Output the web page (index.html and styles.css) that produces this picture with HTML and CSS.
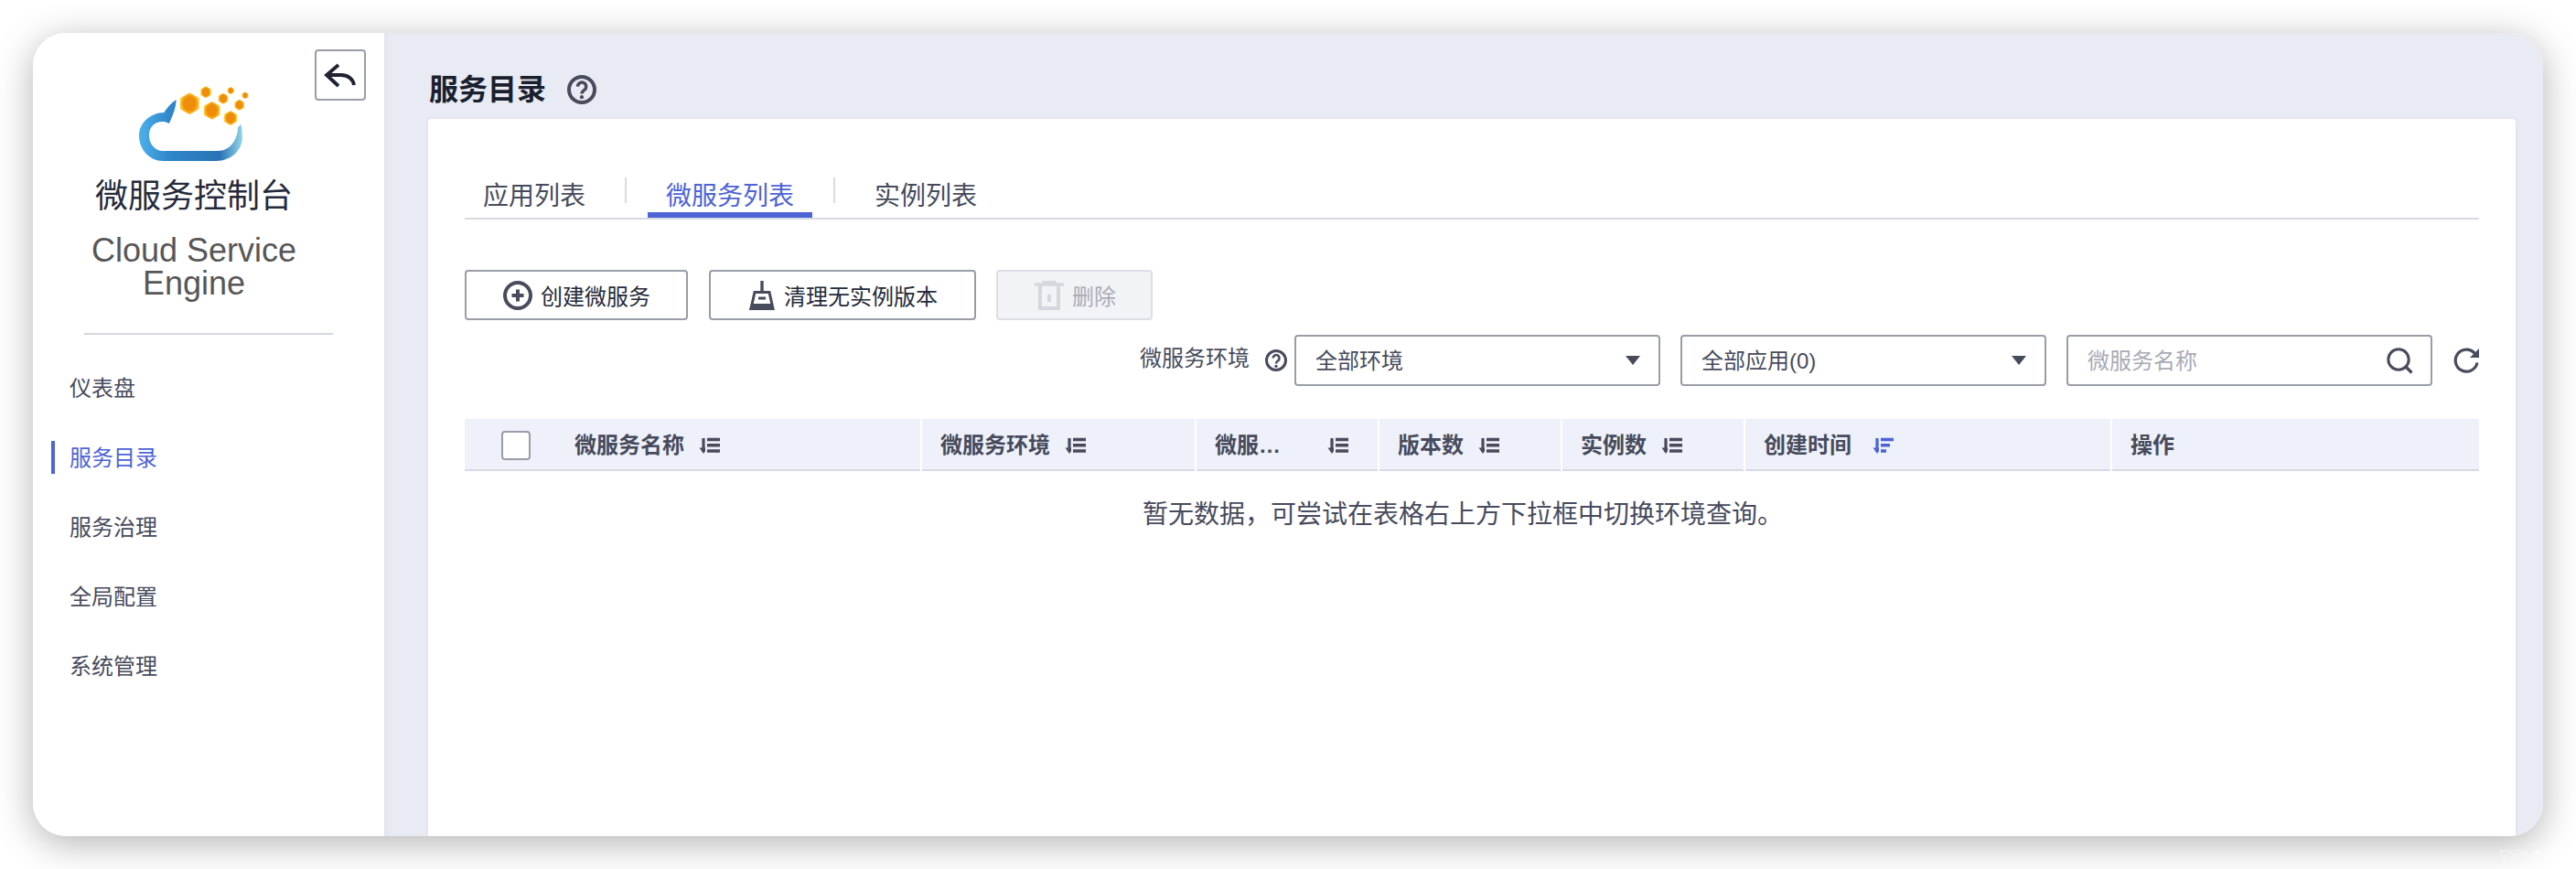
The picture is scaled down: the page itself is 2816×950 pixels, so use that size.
FILE: index.html
```html
<!DOCTYPE html>
<html lang="zh-CN">
<head>
<meta charset="utf-8">
<title>微服务控制台</title>
<link rel="stylesheet" href="styles.css">
</head>
<body>
<svg class="defs" width="0" height="0" aria-hidden="true">
  <defs>
    <radialGradient id="hexfill">
      <stop offset="0.62" stop-color="#ef8d08"/>
      <stop offset="1" stop-color="#ffcd2e"/>
    </radialGradient>
    <linearGradient id="cloudfill" x1="0" y1="0" x2="1" y2="0">
      <stop offset="0" stop-color="#4cb0ec"/>
      <stop offset="0.3" stop-color="#2f86c8"/>
      <stop offset="0.78" stop-color="#2873b6"/>
      <stop offset="1" stop-color="#93d6e8"/>
    </linearGradient>
    <polygon id="hex" points="0,-1 .866,-.5 .866,.5 0,1 -.866,.5 -.866,-.5" fill="url(#hexfill)"/>
    <g id="sort">
      <path d="M5 1V16" fill="none" stroke="currentColor" stroke-width="3.2"/>
      <path d="M0.5 11.5L5 18L7 15V11.5Z" fill="currentColor"/>
      <path d="M9 2.5H23M9 8.8H23M9 15H23" fill="none" stroke="currentColor" stroke-width="3.4"/>
    </g>
  </defs>
</svg>
<div class="window">
  <aside class="sidebar">
    <button class="back" type="button" aria-label="返回">
      <svg width="36" height="30" viewBox="10 12 36 30"><path d="M26 16L13 27L26 39M13 27H29C37 27 42 32 43 38" fill="none" stroke="#1f2333" stroke-width="3.8"/></svg>
    </button>
    <div class="brand">
      <svg class="logo" width="120" height="87" viewBox="32 53 120 87">
        <path d="M72.7 69C68 72 62 78 59.5 83C45 83 32 94 32 108C32 124 44 136 58 136H116C133 136 145 124 145 110L144 96L140 99C140 112 132 125 118 125H58C50 125 43 118 43 108C43 98 50 92 60 93L65 95C68 88 72 80 72.7 69Z" fill="url(#cloudfill)"/>
        <use href="#hex" transform="translate(87.3 73.3) scale(12)"/>
        <use href="#hex" transform="translate(111.7 80.7) scale(10)"/>
        <use href="#hex" transform="translate(105 60.7) scale(6.5)"/>
        <use href="#hex" transform="translate(124 67.7) scale(6)"/>
        <use href="#hex" transform="translate(132.3 59) scale(4)"/>
        <use href="#hex" transform="translate(141.7 74.7) scale(6)"/>
        <use href="#hex" transform="translate(132 89) scale(8)"/>
        <use href="#hex" transform="translate(148 64.3) scale(3.8)"/>
      </svg>
      <div class="brand-cn">微服务控制台</div>
      <div class="brand-en">Cloud Service Engine</div>
    </div>
    <div class="side-rule"></div>
    <nav class="menu">
      <a class="menu-item"><span class="menu-label">仪表盘</span></a>
      <a class="menu-item active"><span class="menu-label">服务目录</span></a>
      <a class="menu-item"><span class="menu-label">服务治理</span></a>
      <a class="menu-item"><span class="menu-label">全局配置</span></a>
      <a class="menu-item"><span class="menu-label">系统管理</span></a>
    </nav>
  </aside>
  <main class="main">
    <header class="page-head">
      <h1 class="page-title">服务目录</h1>
      <svg class="help-lg" width="32" height="32" viewBox="0 0 32 32">
        <circle cx="16" cy="16" r="14" fill="none" stroke="#474b5c" stroke-width="4"/>
        <path d="M11.5 12.6A4.6 4.6 0 1 1 18.8 16.4C17 17.6 16 18.6 16 20.6" fill="none" stroke="#474b5c" stroke-width="3.4"/>
        <circle cx="16" cy="24.2" r="2.1" fill="#474b5c"/>
      </svg>
    </header>
    <section class="card">
      <div class="tabs">
        <a class="tab">应用列表</a>
        <span class="tab-sep"></span>
        <a class="tab active">微服务列表</a>
        <span class="tab-sep"></span>
        <a class="tab">实例列表</a>
      </div>
      <div class="actions">
        <button class="btn btn-create" type="button">
          <svg width="32" height="32" viewBox="0 0 32 32">
            <circle cx="16" cy="16" r="14" fill="none" stroke="#474b5c" stroke-width="4"/>
            <path d="M16 9.5V22.5M9.5 16H22.5" fill="none" stroke="#474b5c" stroke-width="4"/>
          </svg>
          创建微服务
        </button>
        <button class="btn btn-clean" type="button">
          <svg width="28" height="32" viewBox="0 0 28 32">
            <path d="M14 0V12" fill="none" stroke="#474b5c" stroke-width="3.4"/>
            <path d="M6 12.5H22L26 30.5H2Z" fill="none" stroke="#474b5c" stroke-width="3"/>
            <path d="M2 25H26V32H0Z" fill="#474b5c"/>
            <path d="M10 17.5H18V20.5H10Z" fill="#474b5c"/>
          </svg>
          清理无实例版本
        </button>
        <button class="btn btn-delete disabled" type="button">
          <svg width="32" height="32" viewBox="0 0 32 32">
            <path d="M0 4H32M10 4V0.5H22V4" fill="none" stroke="#d5d7dd" stroke-width="3.4"/>
            <path d="M6 4V30H26V4" fill="none" stroke="#d5d7dd" stroke-width="4"/>
            <path d="M16 15V23" fill="none" stroke="#d5d7dd" stroke-width="4"/>
          </svg>
          删除
        </button>
      </div>
      <div class="filters">
        <span class="filter-label">微服务环境</span>
        <svg class="help-sm" width="24" height="24" viewBox="0 0 32 32">
          <circle cx="16" cy="16" r="14" fill="none" stroke="#474b5c" stroke-width="4"/>
          <path d="M11.5 12.6A4.6 4.6 0 1 1 18.8 16.4C17 17.6 16 18.6 16 20.6" fill="none" stroke="#474b5c" stroke-width="3.4"/>
          <circle cx="16" cy="24.4" r="2.2" fill="#474b5c"/>
        </svg>
        <div class="field">
          <span class="field-text">全部环境</span>
          <svg width="16" height="10" viewBox="0 0 16 10"><path d="M0 0H16L8 10Z" fill="#474b5c"/></svg>
        </div>
        <div class="field">
          <span class="field-text">全部应用(0)</span>
          <svg width="16" height="10" viewBox="0 0 16 10"><path d="M0 0H16L8 10Z" fill="#474b5c"/></svg>
        </div>
        <div class="field search">
          <span class="field-text placeholder">微服务名称</span>
          <svg width="29" height="29" viewBox="0 0 29 29">
            <circle cx="13" cy="13" r="11.2" fill="none" stroke="#474b5c" stroke-width="3"/>
            <path d="M21 21L27.5 27.5" fill="none" stroke="#474b5c" stroke-width="3.2"/>
          </svg>
        </div>
        <svg class="refresh" width="28" height="28" viewBox="0 0 28 28">
          <path d="M23.5 6.5A12 12 0 1 0 26 16.5" fill="none" stroke="#474b5c" stroke-width="3.2"/>
          <path d="M28 1V11H18Z" fill="#474b5c"/>
        </svg>
      </div>
      <div class="table-head">
        <div class="th first">
          <span class="checkbox"></span>
          <span class="th-text">微服务名称</span>
          <svg class="sort" width="24" height="18" viewBox="0 0 24 18"><use href="#sort"/></svg>
        </div>
        <div class="th">
          <span class="th-text">微服务环境</span>
          <svg class="sort" width="24" height="18" viewBox="0 0 24 18"><use href="#sort"/></svg>
        </div>
        <div class="th spread">
          <span class="th-text">微服…</span>
          <svg class="sort" width="24" height="18" viewBox="0 0 24 18"><use href="#sort"/></svg>
        </div>
        <div class="th">
          <span class="th-text">版本数</span>
          <svg class="sort" width="24" height="18" viewBox="0 0 24 18"><use href="#sort"/></svg>
        </div>
        <div class="th">
          <span class="th-text">实例数</span>
          <svg class="sort" width="24" height="18" viewBox="0 0 24 18"><use href="#sort"/></svg>
        </div>
        <div class="th wide-gap">
          <span class="th-text">创建时间</span>
          <svg class="sort sorted" width="24" height="18" viewBox="0 0 24 18">
            <path d="M5 1V16" fill="none" stroke="currentColor" stroke-width="3.2"/>
            <path d="M0.5 11.5L5 18L7 15V11.5Z" fill="currentColor"/>
            <path d="M9 2.5H23M9 8.8H19M9 15H15" fill="none" stroke="currentColor" stroke-width="3.4"/>
          </svg>
        </div>
        <div class="th last">
          <span class="th-text">操作</span>
        </div>
      </div>
      <div class="empty">暂无数据，可尝试在表格右上方下拉框中切换环境查询。</div>
    </section>
  </main>
</div>
<div class="watermark">CSDN @</div>
</body>
</html>
```

FILE: styles.css
```css
* { box-sizing: border-box; }

html, body {
  margin: 0;
  padding: 0;
  height: 950px;
  overflow: hidden;
  background: #fff;
}

body {
  position: relative;
  font-family: "Liberation Sans", "Noto Sans CJK SC", sans-serif;
  color: #474b5c;
  font-size: 24px;
}

.defs { position: absolute; }

.window {
  margin: 36px 0 0 36px;
  width: 2744px;
  height: 878px;
  display: flex;
  border-radius: 36px;
  overflow: hidden;
  background: #fff;
  box-shadow: 0 8px 40px rgba(0, 0, 0, 0.3);
}

/* Sidebar */
.sidebar {
  position: relative;
  width: 384px;
  flex: none;
  background: #fff;
}

.back {
  position: absolute;
  top: 18px;
  left: 308px;
  width: 56px;
  height: 56px;
  padding: 0;
  display: flex;
  align-items: center;
  justify-content: center;
  background: #fff;
  border: 2px solid #9a9da8;
  border-radius: 4px;
}

.brand {
  padding: 57px 32px 0 0;
  display: flex;
  flex-direction: column;
  align-items: center;
}

.logo { display: block; }

.brand-cn {
  margin-top: 17px;
  font-size: 36px;
  line-height: 36px;
  color: #252b3a;
}

.brand-en {
  margin-top: 23px;
  width: 240px;
  text-align: center;
  font-size: 36px;
  line-height: 36px;
  color: #575757;
}

.side-rule {
  margin: 36px 56px 0;
  height: 2px;
  background: #d5d8e0;
}

.menu { margin-top: 20px; }

.menu-item {
  display: flex;
  align-items: center;
  height: 76px;
  margin-left: 20px;
}

.menu-label {
  display: block;
  height: 36px;
  line-height: 38px;
  padding-left: 16px;
  border-left: 4px solid transparent;
  font-size: 24px;
  color: #474b5c;
}

.menu-item.active .menu-label {
  color: #4d63d6;
  border-left-color: #4d63d6;
}

/* Main */
.main {
  flex: 1;
  min-width: 0;
  display: flex;
  flex-direction: column;
  padding: 0 30px 0 48px;
  background: #e8ebf3;
  box-shadow: inset 4px 0 4px -2px rgba(60, 70, 120, 0.05);
}

.page-head {
  height: 94px;
  flex: none;
  padding: 30px 0 0 1px;
  display: flex;
  align-items: center;
  gap: 23px;
}

.page-title {
  margin: 0;
  font-size: 32px;
  line-height: 36px;
  font-weight: 700;
  color: #1b1f2e;
}

.card {
  flex: 1;
  padding: 62px 40px 0;
  background: #fff;
  border-radius: 4px 4px 0 0;
  box-shadow: 0 0 4px rgba(60, 70, 120, 0.08);
}

/* Tabs */
.tabs {
  display: flex;
  align-items: flex-start;
  height: 48px;
  border-bottom: 2px solid #d8dae2;
}

.tab {
  display: block;
  height: 46px;
  padding: 0 20px;
  font-size: 28px;
  line-height: 46px;
  color: #474b5c;
}

.tab.active {
  color: #4d63d6;
  border-bottom: 6px solid #4d63d6;
}

.tab-sep {
  width: 2px;
  height: 28px;
  margin: 2px 23px 0;
  background: #d8dae2;
}

/* Buttons */
.actions {
  margin-top: 55px;
  display: flex;
  gap: 23px;
}

.btn {
  height: 55px;
  padding: 0 0 0 40px;
  display: flex;
  align-items: center;
  gap: 9px;
  font-family: inherit;
  font-size: 24px;
  color: #252b3a;
  background: #fff;
  border: 2px solid #9a9da8;
  border-radius: 4px;
}

.btn-create { width: 244px; }
.btn-clean { width: 292px; padding-left: 42px; gap: 10px; }
.btn-delete { width: 171px; margin-left: -1px; }

.btn.disabled {
  color: #a9acb6;
  background: #f2f3f6;
  border-color: #dcdee4;
}

/* Filters */
.filters {
  margin-top: 16px;
  display: flex;
  justify-content: flex-end;
  align-items: center;
}

.filter-label {
  margin-top: -4px;
  line-height: 36px;
  color: #474b5c;
}

.help-sm { margin: 0 8px 0 17px; }

.field {
  width: 400px;
  height: 56px;
  margin-right: 22px;
  padding: 0 20px 0 21px;
  display: flex;
  align-items: center;
  justify-content: space-between;
  color: #474b5c;
  background: #fff;
  border: 2px solid #9a9da8;
  border-radius: 4px;
}

.field.search { padding-right: 19px; margin-right: 23px; }

.field-text { margin-top: -4px; }

.placeholder { color: #a8abb5; }

.refresh { flex: none; }

/* Table */
.table-head {
  margin-top: 36px;
  height: 57px;
  display: grid;
  grid-template-columns: 500px 300px 200px 200px 200px 401px 401px;
  background: #eef1fa;
  border-bottom: 2px solid #d8dae2;
}

.th {
  display: flex;
  align-items: center;
  gap: 16px;
  padding-left: 20px;
  border-right: 2px solid #fff;
  margin-bottom: -2px;
}

.th.first { padding-left: 40px; }
.th.last { border-right: 0; }
.th.spread { gap: 51px; }
.th.wide-gap { gap: 23px; }

.th-text {
  font-weight: 700;
  color: #474b5c;
  line-height: 36px;
}

.checkbox {
  width: 32px;
  height: 32px;
  margin-right: 32px;
  background: #fff;
  border: 2px solid #9a9da8;
  border-radius: 4px;
}

.sort { color: #474b5c; flex: none; }
.sort.sorted { color: #4d63d6; }

.empty {
  height: 90px;
  padding-right: 20px;
  display: flex;
  align-items: center;
  justify-content: center;
  font-size: 28px;
  color: #474b5c;
}

.watermark {
  position: absolute;
  left: 2733px;
  top: 926px;
  font-size: 11px;
  line-height: 14px;
  color: rgba(255, 255, 255, 0.55);
}
```
